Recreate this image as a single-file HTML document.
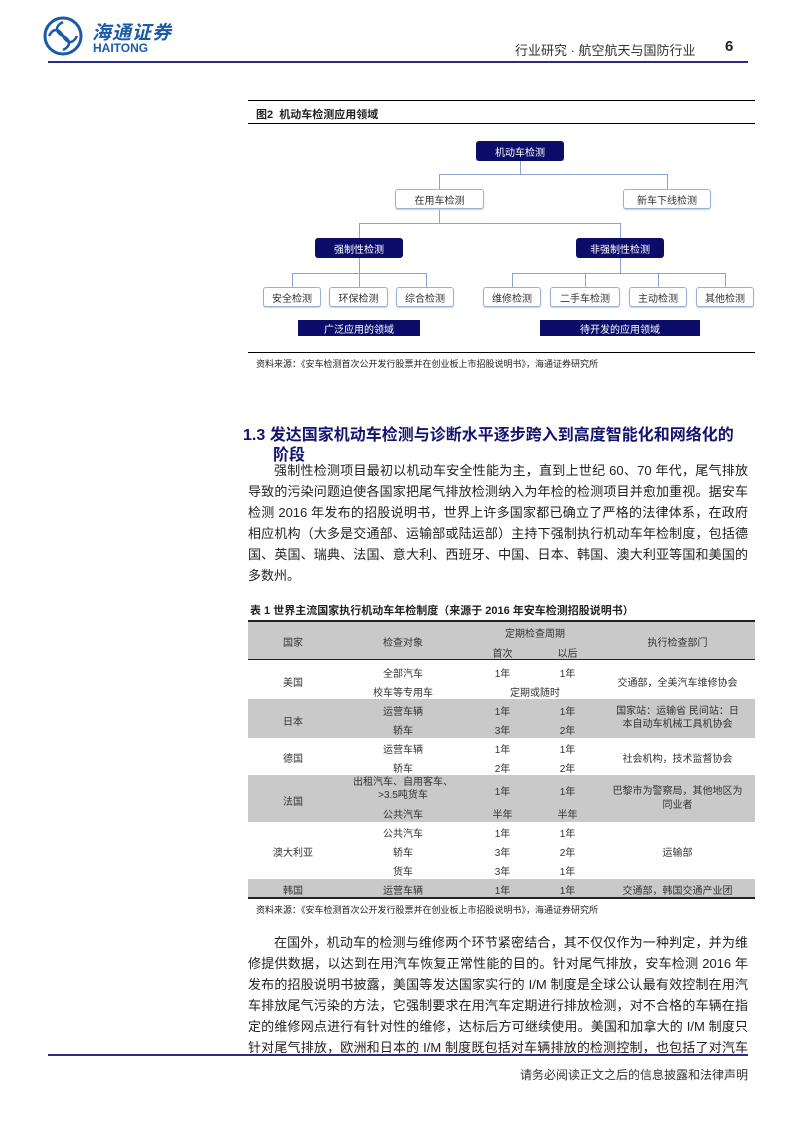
<!DOCTYPE html>
<html><head><meta charset="utf-8"><style>
*{margin:0;padding:0;box-sizing:border-box}
body{width:793px;height:1122px;background:#fff;position:relative;overflow:hidden;font-family:"Liberation Sans","Noto Sans CJK SC",sans-serif;color:#222}
.a{position:absolute;white-space:nowrap}
.ln{position:absolute;background:#8aa3cf}
.bx{position:absolute;border:1px solid #9bb0d6;border-radius:3px;background:#fff;font-size:10px;color:#333;display:flex;align-items:center;justify-content:center;box-shadow:0 1px 1px #ccd}
.dk{position:absolute;background:#0c0c6a;color:#fff;border-radius:3px;font-size:10px;display:flex;align-items:center;justify-content:center}
.p{position:absolute;left:248px;width:500px;font-size:13px;line-height:21px}
.p div{height:21px;text-align:justify;text-align-last:justify;overflow:visible}
.p div.i{padding-left:26px}
.p div.e{text-align-last:left}
.c{position:absolute;font-size:10px;color:#333;text-align:center;white-space:nowrap}
.g{position:absolute;left:248px;width:507px;background:#c9c9c9}
</style></head><body>
<svg class="a" style="left:43px;top:16px" width="40" height="40" viewBox="0 0 40 40"><circle cx="20" cy="20" r="18" fill="none" stroke="#1a5aa6" stroke-width="3"/><path d="M20 6 C12 10 12 16 20 20 C28 24 28 30 20 34 M6 20 C10 12 16 12 20 20 C24 28 30 28 34 20" fill="none" stroke="#1a5aa6" stroke-width="2.5"/></svg>
<div class="a" style="left:92px;top:18px;font-size:19px;color:#1a5aa6;font-style:italic;font-weight:bold;letter-spacing:1px">海通证券</div>
<div class="a" style="left:93px;top:41px;font-size:12px;color:#1a5aa6;font-weight:bold">HAITONG</div>
<div class="a" style="left:515px;top:40px;font-size:13px;color:#333">行业研究 · 航空航天与国防行业</div>
<div class="a" style="left:725px;top:38px;font-size:15px;font-weight:bold">6</div>
<div class="a" style="left:48px;top:61px;width:700px;height:2px;background:#2a2a8a"></div>
<div class="a" style="left:248px;top:100px;width:507px;height:1px;background:#000"></div>
<div class="a" style="left:256px;top:106px;font-size:11px;font-weight:bold">图2&nbsp; 机动车检测应用领域</div>
<div class="a" style="left:248px;top:123px;width:507px;height:1px;background:#000"></div>
<div class="ln" style="left:520px;top:161px;width:1px;height:13px"></div>
<div class="ln" style="left:439px;top:174px;width:228px;height:1px"></div>
<div class="ln" style="left:439px;top:174px;width:1px;height:15px"></div>
<div class="ln" style="left:667px;top:174px;width:1px;height:15px"></div>
<div class="ln" style="left:439px;top:209px;width:1px;height:14px"></div>
<div class="ln" style="left:359px;top:223px;width:261px;height:1px"></div>
<div class="ln" style="left:359px;top:223px;width:1px;height:15px"></div>
<div class="ln" style="left:620px;top:223px;width:1px;height:15px"></div>
<div class="ln" style="left:359px;top:258px;width:1px;height:29px"></div>
<div class="ln" style="left:620px;top:258px;width:1px;height:15px"></div>
<div class="ln" style="left:292px;top:273px;width:134px;height:1px"></div>
<div class="ln" style="left:292px;top:273px;width:1px;height:14px"></div>
<div class="ln" style="left:426px;top:273px;width:1px;height:14px"></div>
<div class="ln" style="left:512px;top:273px;width:213px;height:1px"></div>
<div class="ln" style="left:512px;top:273px;width:1px;height:14px"></div>
<div class="ln" style="left:585px;top:273px;width:1px;height:14px"></div>
<div class="ln" style="left:658px;top:273px;width:1px;height:14px"></div>
<div class="ln" style="left:725px;top:273px;width:1px;height:14px"></div>
<div class="dk" style="left:476px;top:141px;width:88px;height:20px">机动车检测</div>
<div class="bx" style="left:395px;top:189px;width:89px;height:20px">在用车检测</div>
<div class="bx" style="left:623px;top:189px;width:88px;height:20px">新车下线检测</div>
<div class="dk" style="left:315px;top:238px;width:88px;height:20px">强制性检测</div>
<div class="dk" style="left:576px;top:238px;width:88px;height:20px">非强制性检测</div>
<div class="bx" style="left:263px;top:287px;width:58px;height:20px">安全检测</div>
<div class="bx" style="left:329px;top:287px;width:59px;height:20px">环保检测</div>
<div class="bx" style="left:396px;top:287px;width:58px;height:20px">综合检测</div>
<div class="bx" style="left:483px;top:287px;width:58px;height:20px">维修检测</div>
<div class="bx" style="left:550px;top:287px;width:70px;height:20px">二手车检测</div>
<div class="bx" style="left:629px;top:287px;width:58px;height:20px">主动检测</div>
<div class="bx" style="left:696px;top:287px;width:58px;height:20px">其他检测</div>
<div class="dk" style="left:298px;top:320px;width:122px;height:16px;border-radius:0">广泛应用的领域</div>
<div class="dk" style="left:540px;top:320px;width:160px;height:16px;border-radius:0">待开发的应用领域</div>
<div class="a" style="left:248px;top:352px;width:507px;height:1px;background:#000"></div>
<div class="a" style="left:256px;top:357px;font-size:9px">资料来源：《安车检测首次公开发行股票并在创业板上市招股说明书》，海通证券研究所</div>
<div class="a" style="left:243px;top:421px;font-size:16px;font-weight:bold;color:#141470">1.3 发达国家机动车检测与诊断水平逐步跨入到高度智能化和网络化的</div>
<div class="a" style="left:273px;top:441px;font-size:16px;font-weight:bold;color:#141470">阶段</div>
<div class="p" style="top:460px">
<div class="i">强制性检测项目最初以机动车安全性能为主，直到上世纪 60、70 年代，尾气排放</div>
<div>导致的污染问题迫使各国家把尾气排放检测纳入为年检的检测项目并愈加重视。据安车</div>
<div>检测 2016 年发布的招股说明书，世界上许多国家都已确立了严格的法律体系，在政府</div>
<div>相应机构（大多是交通部、运输部或陆运部）主持下强制执行机动车年检制度，包括德</div>
<div>国、英国、瑞典、法国、意大利、西班牙、中国、日本、韩国、澳大利亚等国和美国的</div>
<div class="e">多数州。</div>
</div>
<div class="a" style="left:250px;top:602px;font-size:11px;font-weight:bold">表 1 世界主流国家执行机动车年检制度（来源于 2016 年安车检测招股说明书）</div>
<div class="g" style="top:621px;height:39px"></div>
<div class="g" style="top:699px;height:39px"></div>
<div class="g" style="top:775px;height:47px"></div>
<div class="g" style="top:879px;height:19px"></div>
<div class="a" style="left:248px;top:620px;width:507px;height:2px;background:#222"></div>
<div class="a" style="left:248px;top:659px;width:507px;height:1px;background:#222"></div>
<div class="a" style="left:248px;top:897px;width:507px;height:2px;background:#222"></div>
<div class="c" style="left:248px;width:90px;top:634px">国家</div>
<div class="c" style="left:338px;width:130px;top:634px">检查对象</div>
<div class="c" style="left:470px;width:130px;top:625px">定期检查周期</div>
<div class="c" style="left:470px;width:65px;top:645px">首次</div>
<div class="c" style="left:535px;width:65px;top:645px">以后</div>
<div class="c" style="left:600px;width:155px;top:634px">执行检查部门</div>
<div class="c" style="left:248px;width:90px;top:674px">美国</div>
<div class="c" style="left:338px;width:130px;top:665px">全部汽车</div>
<div class="c" style="left:338px;width:130px;top:684px">校车等专用车</div>
<div class="c" style="left:470px;width:65px;top:665px">1年</div>
<div class="c" style="left:535px;width:65px;top:665px">1年</div>
<div class="c" style="left:470px;width:130px;top:684px">定期或随时</div>
<div class="c" style="left:600px;width:155px;top:674px">交通部，全美汽车维修协会</div>
<div class="c" style="left:248px;width:90px;top:713px">日本</div>
<div class="c" style="left:338px;width:130px;top:703px">运营车辆</div>
<div class="c" style="left:338px;width:130px;top:722px">轿车</div>
<div class="c" style="left:470px;width:65px;top:703px">1年</div>
<div class="c" style="left:535px;width:65px;top:703px">1年</div>
<div class="c" style="left:470px;width:65px;top:722px">3年</div>
<div class="c" style="left:535px;width:65px;top:722px">2年</div>
<div class="c" style="left:600px;width:155px;top:705px;line-height:13px">国家站：运输省 民间站：日<br>本自动车机械工具机协会</div>
<div class="c" style="left:248px;width:90px;top:750px">德国</div>
<div class="c" style="left:338px;width:130px;top:741px">运营车辆</div>
<div class="c" style="left:338px;width:130px;top:760px">轿车</div>
<div class="c" style="left:470px;width:65px;top:741px">1年</div>
<div class="c" style="left:535px;width:65px;top:741px">1年</div>
<div class="c" style="left:470px;width:65px;top:760px">2年</div>
<div class="c" style="left:535px;width:65px;top:760px">2年</div>
<div class="c" style="left:600px;width:155px;top:750px">社会机构，技术监督协会</div>
<div class="c" style="left:248px;width:90px;top:793px">法国</div>
<div class="c" style="left:338px;width:130px;top:776px;line-height:13px">出租汽车、自用客车、<br>&gt;3.5吨货车</div>
<div class="c" style="left:338px;width:130px;top:806px">公共汽车</div>
<div class="c" style="left:470px;width:65px;top:783px">1年</div>
<div class="c" style="left:535px;width:65px;top:783px">1年</div>
<div class="c" style="left:470px;width:65px;top:806px">半年</div>
<div class="c" style="left:535px;width:65px;top:806px">半年</div>
<div class="c" style="left:600px;width:155px;top:785px;line-height:14px">巴黎市为警察局，其他地区为<br>同业者</div>
<div class="c" style="left:248px;width:90px;top:844px">澳大利亚</div>
<div class="c" style="left:338px;width:130px;top:825px">公共汽车</div>
<div class="c" style="left:338px;width:130px;top:844px">轿车</div>
<div class="c" style="left:338px;width:130px;top:863px">货车</div>
<div class="c" style="left:470px;width:65px;top:825px">1年</div>
<div class="c" style="left:535px;width:65px;top:825px">1年</div>
<div class="c" style="left:470px;width:65px;top:844px">3年</div>
<div class="c" style="left:535px;width:65px;top:844px">2年</div>
<div class="c" style="left:470px;width:65px;top:863px">3年</div>
<div class="c" style="left:535px;width:65px;top:863px">1年</div>
<div class="c" style="left:600px;width:155px;top:844px">运输部</div>
<div class="c" style="left:248px;width:90px;top:882px">韩国</div>
<div class="c" style="left:338px;width:130px;top:882px">运营车辆</div>
<div class="c" style="left:470px;width:65px;top:882px">1年</div>
<div class="c" style="left:535px;width:65px;top:882px">1年</div>
<div class="c" style="left:600px;width:155px;top:882px">交通部，韩国交通产业团</div>
<div class="a" style="left:256px;top:903px;font-size:9px">资料来源：《安车检测首次公开发行股票并在创业板上市招股说明书》，海通证券研究所</div>
<div class="p" style="top:932px">
<div class="i">在国外，机动车的检测与维修两个环节紧密结合，其不仅仅作为一种判定，并为维</div>
<div>修提供数据，以达到在用汽车恢复正常性能的目的。针对尾气排放，安车检测 2016 年</div>
<div>发布的招股说明书披露，美国等发达国家实行的 I/M 制度是全球公认最有效控制在用汽</div>
<div>车排放尾气污染的方法，它强制要求在用汽车定期进行排放检测，对不合格的车辆在指</div>
<div>定的维修网点进行有针对性的维修，达标后方可继续使用。美国和加拿大的 I/M 制度只</div>
<div>针对尾气排放，欧洲和日本的 I/M 制度既包括对车辆排放的检测控制，也包括了对汽车</div>
</div>
<div class="a" style="left:48px;top:1054px;width:700px;height:2px;background:#2a2a8a"></div>
<div class="a" style="left:520px;top:1066px;width:228px;text-align:right;font-size:12px;color:#333">请务必阅读正文之后的信息披露和法律声明</div>
</body></html>
